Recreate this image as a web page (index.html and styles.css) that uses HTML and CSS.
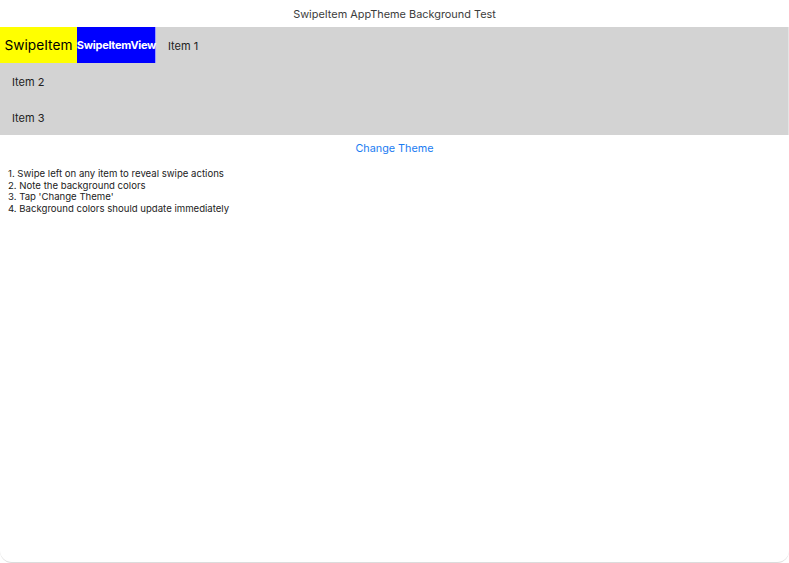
FILE: index.html
```html
<!DOCTYPE html>
<html>
<head>
<meta charset="utf-8">
<link rel="stylesheet" href="styles.css">
</head>
<body>
<div class="window">
  <div class="title">SwipeItem AppTheme Background Test</div>
  <div class="list">
    <div class="row">
      <div class="swipe-item">SwipeItem</div>
      <div class="swipe-view">SwipeItemView</div>
      <div class="label">Item 1</div>
    </div>
    <div class="row"><div class="label">Item 2</div></div>
    <div class="row"><div class="label">Item 3</div></div>
  </div>
  <div class="action">Change Theme</div>
  <div class="instructions">
    <div>1. Swipe left on any item to reveal swipe actions</div>
    <div>2. Note the background colors</div>
    <div>3. Tap 'Change Theme'</div>
    <div>4. Background colors should update immediately</div>
  </div>
</div>
</body>
</html>
```
FILE: styles.css
```css
html, body {
  margin: 0;
  padding: 0;
  background: #ffffff;
}
body {
  font-family: Inter, "Noto Sans", sans-serif;
  color: #222;
}
.window {
  width: 789px;
  height: 563px;
  box-sizing: border-box;
  border-radius: 0 0 12px 12px;
  border-bottom: 1px solid #dcdcdc;
  overflow: hidden;
  background: #fff;
}
.title {
  height: 27px;
  line-height: 28px;
  text-align: center;
  font-size: 10.9px;
  color: #3c3c3c;
}
.list {
  background: #d3d3d3;
  border-right: 1px solid #e4e4e4;
}
.row {
  display: flex;
  align-items: center;
  height: 36px;
}
.swipe-item {
  width: 77px;
  height: 36px;
  background: #ffff00;
  color: #000;
  font-size: 13.7px;
  display: flex;
  align-items: center;
  justify-content: center;
}
.swipe-view {
  width: 77px;
  height: 36px;
  background: #0000ff;
  border-right: 1px solid #9a9aff;
  color: #fff;
  font-size: 11px;
  font-weight: 700;
  letter-spacing: -0.3px;
  display: flex;
  align-items: center;
  justify-content: center;
  padding-left: 1px;
}
.label {
  font-size: 11px;
  color: #222;
  padding-left: 12px;
  padding-top: 1px;
}
.action {
  text-align: center;
  color: #1a7bf2;
  font-size: 10.8px;
  height: 26px;
  line-height: 28px;
}
.instructions {
  padding: 7px 0 0 8px;
  font-size: 9.6px;
  line-height: 11.7px;
  color: #222;
}
```
